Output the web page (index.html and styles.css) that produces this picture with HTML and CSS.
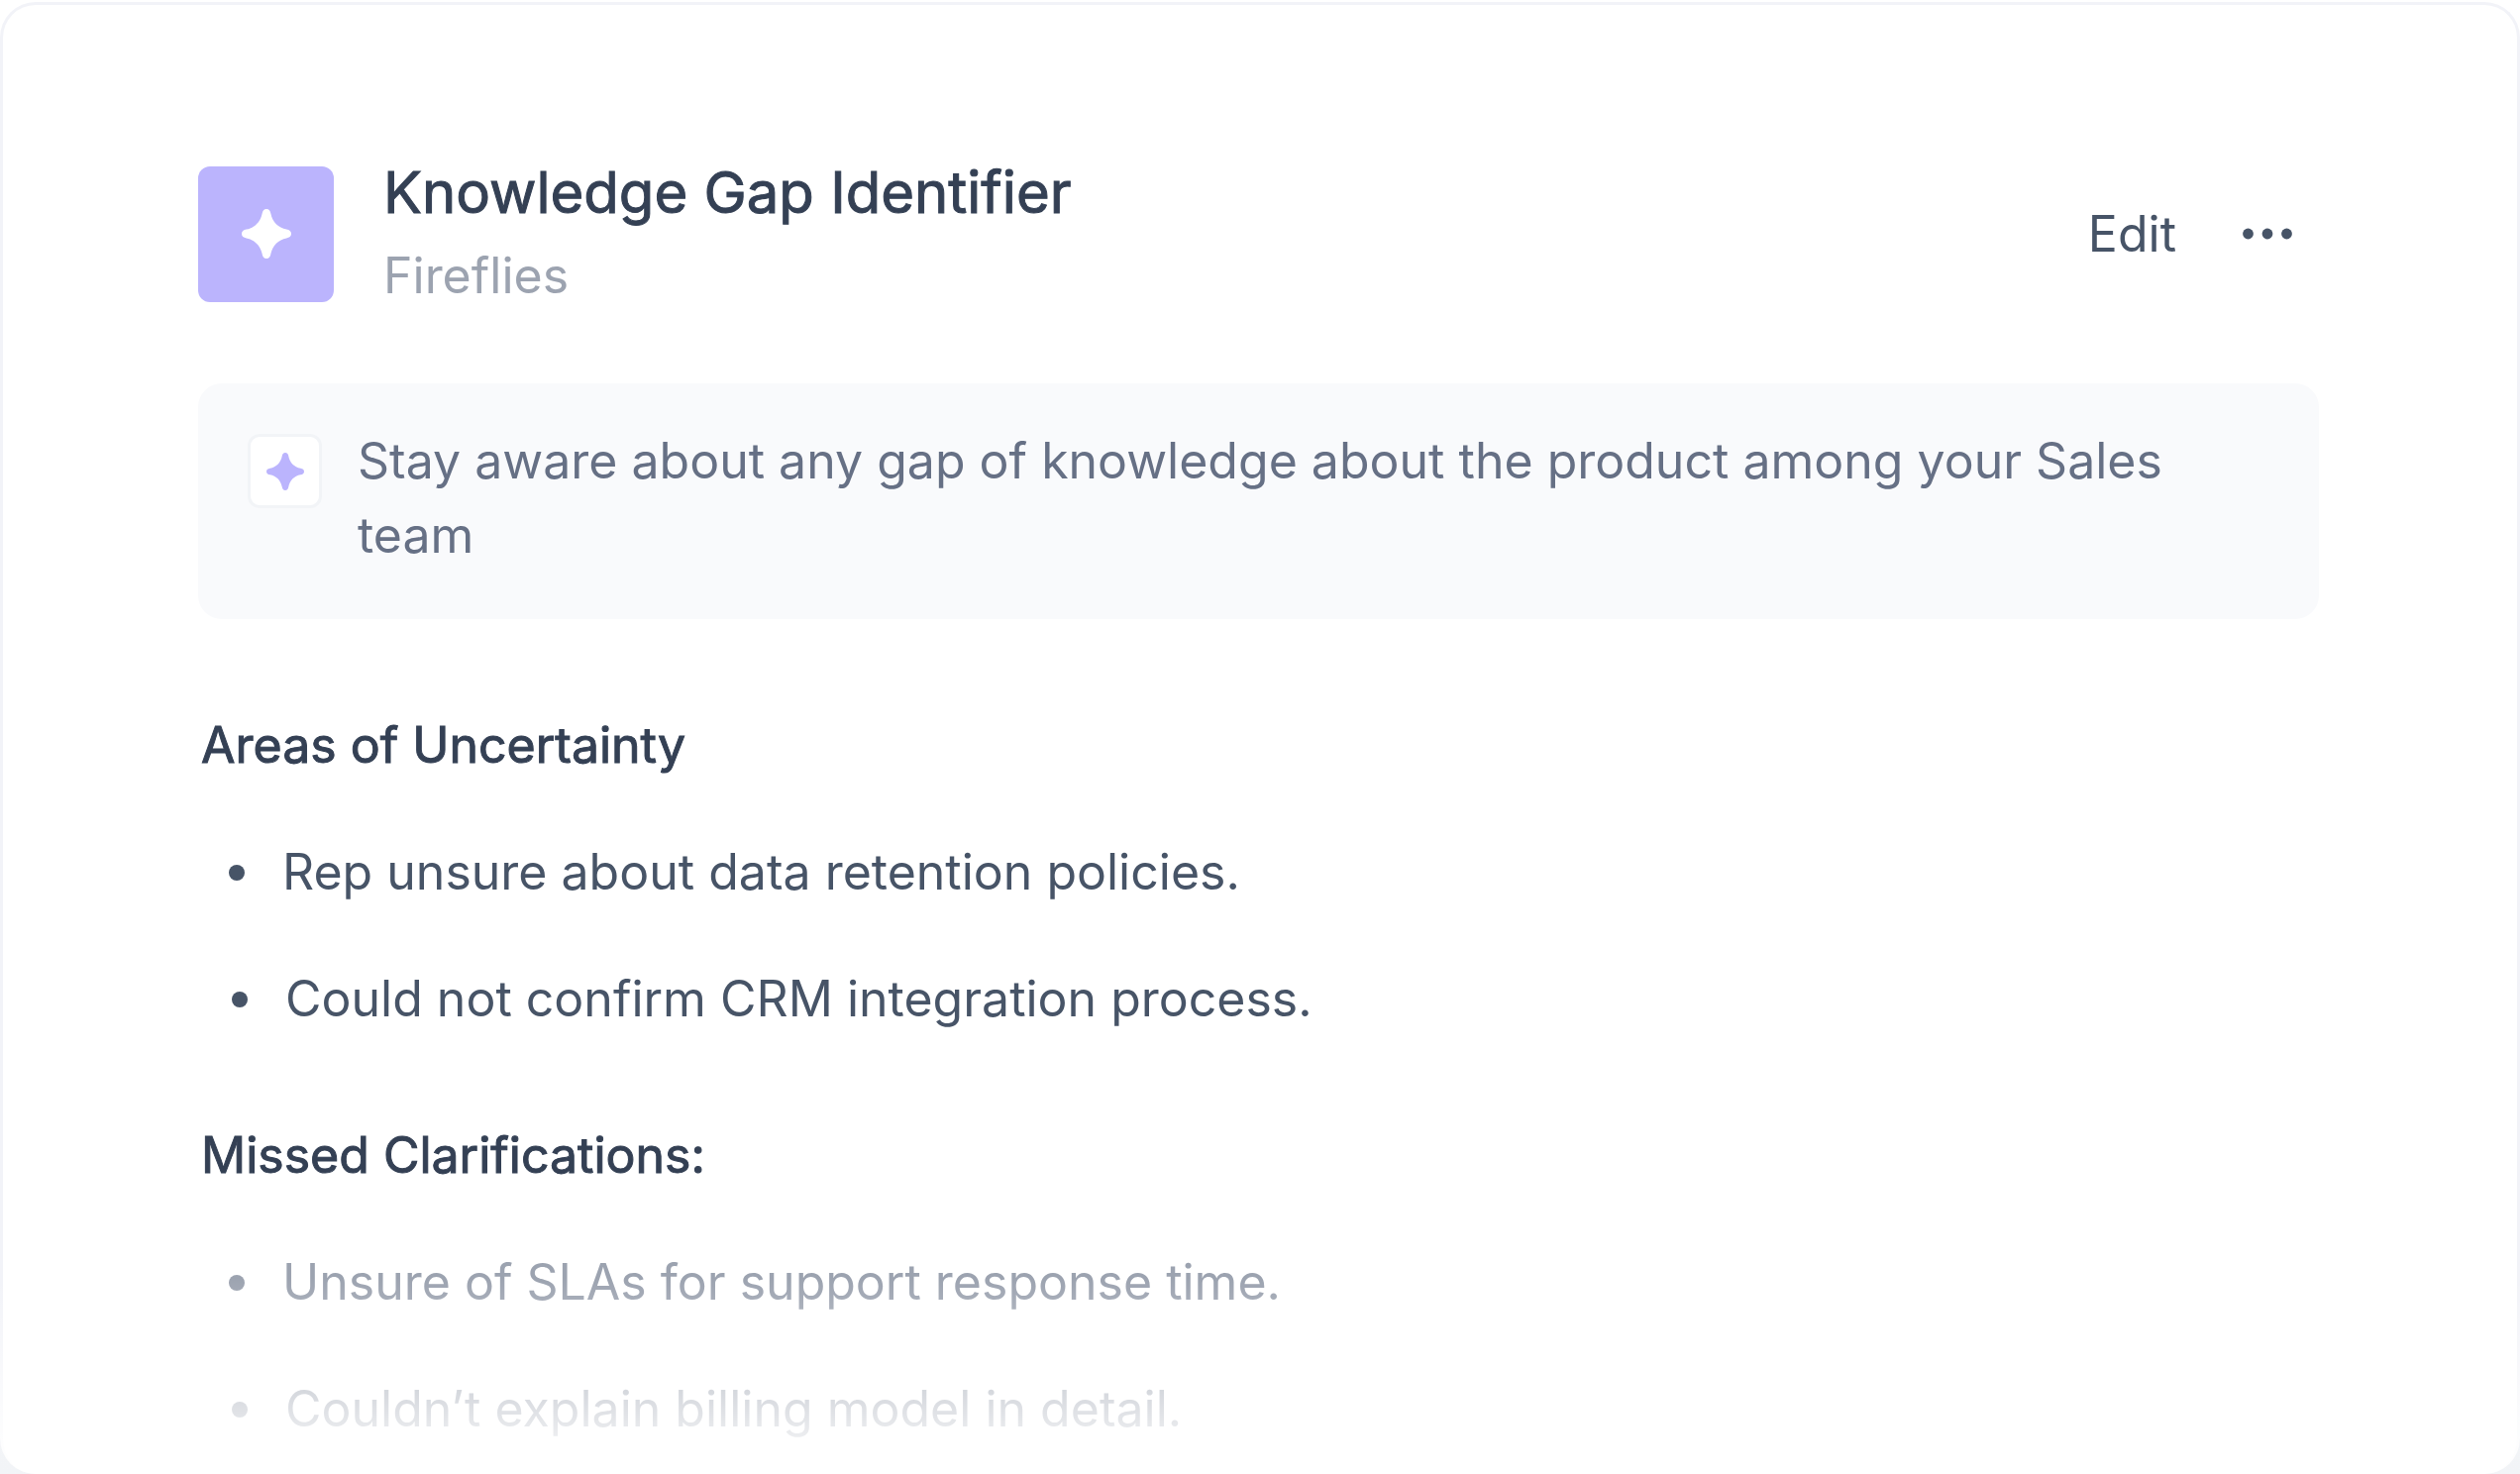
FILE: index.html
```html
<!DOCTYPE html>
<html lang="en">
<head>
<meta charset="utf-8">
<meta name="viewport" content="width=device-width, initial-scale=1">
<title>Knowledge Gap Identifier</title>
<link rel="stylesheet" href="styles.css">
</head>
<body>
<svg class="symbols" width="0" height="0" aria-hidden="true">
  <symbol id="spark" viewBox="0 0 50 50">
    <path d="M25 0C27.5 0 28.9 1.8 29.4 4.8C31 13 37 19 45.2 20.6C48.2 21.1 50 22.5 50 25C50 27.5 48.2 28.9 45.2 29.4C37 31 31 37 29.4 45.2C28.9 48.2 27.5 50 25 50C22.5 50 21.1 48.2 20.6 45.2C19 37 13 31 4.8 29.4C1.8 28.9 0 27.5 0 25C0 22.5 1.8 21.1 4.8 20.6C13 19 19 13 20.6 4.8C21.1 1.8 22.5 0 25 0Z" fill="currentColor"/>
  </symbol>
</svg>
<main class="card">
  <header class="header">
    <span class="app-icon"><svg class="app-spark" aria-hidden="true"><use href="#spark"/></svg></span>
    <div class="heading">
      <h1 class="title">Knowledge Gap Identifier</h1>
      <p class="author">Fireflies</p>
    </div>
    <div class="actions">
      <button class="edit" type="button">Edit</button>
      <button class="more" type="button" aria-label="More options">
        <svg class="dots" viewBox="0 0 50 12" aria-hidden="true"><circle cx="5.5" cy="6" r="5.4"/><circle cx="25" cy="6" r="5.4"/><circle cx="44.5" cy="6" r="5.4"/></svg>
      </button>
    </div>
  </header>

  <section class="notice">
    <span class="chip"><svg class="chip-spark" aria-hidden="true"><use href="#spark"/></svg></span>
    <p class="notice-text">Stay aware about any gap of knowledge about the product among your Sales team</p>
  </section>

  <section class="group">
    <h2 class="group-title">Areas of Uncertainty</h2>
    <ul class="list">
      <li class="item">Rep unsure about data retention policies.</li>
      <li class="item">Could not confirm CRM integration process.</li>
    </ul>
  </section>

  <section class="group">
    <h2 class="group-title">Missed Clarifications:</h2>
    <ul class="list list-muted">
      <li class="item">Unsure of SLAs for support response time.</li>
      <li class="item">Couldn’t explain billing model in detail.</li>
    </ul>
  </section>
</main>
</body>
</html>
```

FILE: styles.css
```css
* {
  box-sizing: border-box;
  margin: 0;
  padding: 0;
}

body {
  min-height: 100vh;
  padding-top: 2px;
  display: flex;
  flex-direction: column;
  background: linear-gradient(#ffffff 50%, #f2f4f7);
  color: #475467;
  font-family: Inter, "Liberation Sans", sans-serif;
  font-size: 50px;
  line-height: 75px;
}

.symbols {
  position: absolute;
}

.card {
  position: relative;
  flex: 1;
  padding: 149px 200px 25px 197px;
  border: 3px solid #f2f3f8;
  border-bottom: 0;
  border-radius: 36px;
  background: #ffffff;
}

/* Fades the end of the report out towards the bottom edge */
.card::after {
  content: "";
  position: absolute;
  inset: auto -3px 0;
  height: 220px;
  border-radius: 0 0 36px 36px;
  background: linear-gradient(rgba(255, 255, 255, 0) 10%, #ffffff);
  pointer-events: none;
}

.header {
  display: flex;
  align-items: center;
  gap: 50px;
}

.app-icon {
  flex: none;
  display: grid;
  place-items: center;
  width: 137px;
  height: 137px;
  border-radius: 12px;
  background: #bbb4fd;
  color: #ffffff;
}

.app-spark {
  width: 50px;
  height: 50px;
}

.heading {
  flex: 1;
  display: grid;
  gap: 4px;
}

.title,
.group-title {
  color: #344054;
  font-weight: 400;
  -webkit-text-stroke: 1px #344054;
}

.title {
  font-size: 58px;
  line-height: 80px;
}

.author {
  color: #9ca3b0;
  line-height: 80px;
}

.actions {
  display: flex;
  align-items: center;
  gap: 40px;
}

.edit,
.more {
  border: 0;
  background: none;
  color: #475467;
  font: inherit;
  cursor: pointer;
}

.more {
  display: grid;
  place-items: center;
  width: 104px;
  height: 75px;
}

.dots {
  width: 50px;
  height: 12px;
  fill: currentColor;
}

.notice {
  display: flex;
  gap: 36px;
  margin-top: 69px;
  padding: 41px 50px 47px;
  border-radius: 24px;
  background: #f9fafc;
  color: #667085;
}

.chip {
  flex: none;
  display: grid;
  place-items: center;
  width: 75px;
  height: 75px;
  margin-top: 10px;
  border: 3px solid #f2f4f7;
  border-radius: 12px;
  background: #ffffff;
  color: #bbb4fd;
}

.chip-spark {
  width: 38px;
  height: 38px;
}

.group {
  display: grid;
  gap: 53px;
  margin-top: 83px;
  padding-left: 3px;
}

.notice + .group {
  margin-top: 90px;
}

.group-title {
  font-size: 50px;
}

.list {
  display: grid;
  gap: 53px;
  padding-left: 28px;
  list-style: none;
}

.list-muted {
  color: #9ca3b0;
}

.item {
  display: flex;
  align-items: center;
  gap: 38px;
}

.item + .item {
  padding-left: 3px;
}

.item::before {
  content: "";
  flex: none;
  width: 16px;
  height: 16px;
  border-radius: 50%;
  background: currentColor;
}
```
